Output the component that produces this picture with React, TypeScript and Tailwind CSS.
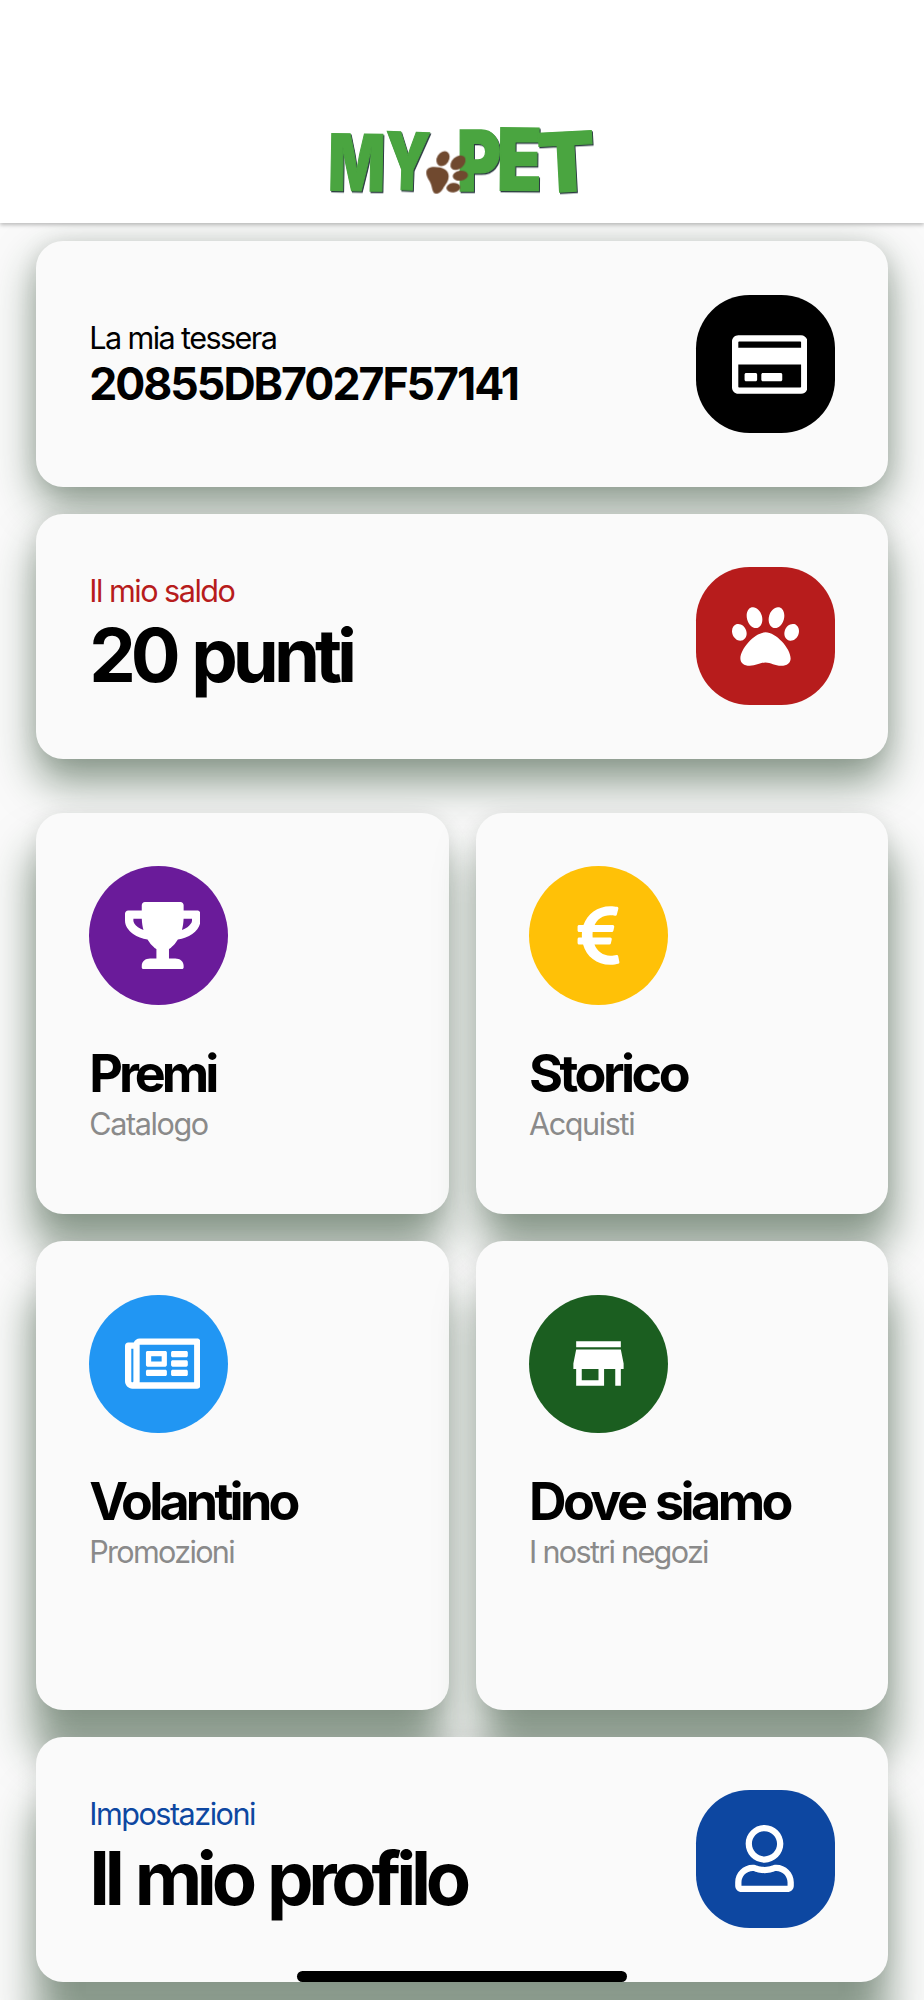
import type { ReactNode } from "react";
import { FaEuroSign, FaPaw, FaRegCreditCard, FaRegNewspaper, FaRegUser, FaTrophy } from "react-icons/fa";

function Logo() {
  const letters = [
    { char: "M", transform: "translate(54 241) rotate(1) scale(0.76 1)", size: 234 },
    { char: "Y", transform: "translate(222 237) rotate(2) scale(0.73 1)", size: 238 },
    { char: "P", transform: "translate(441 243) scale(0.8 1)", size: 252 },
    { char: "E", transform: "translate(560 241) rotate(0.5) scale(0.85 1)", size: 258 },
    { char: "T", transform: "translate(688 249) rotate(-3) scale(1.02 1)", size: 246 },
  ];
  return (
    <svg
      className="h-[130px] w-[300px] overflow-visible"
      viewBox="0 0 900 390"
      fontFamily="Inter, sans-serif"
      fontWeight="900"
    >
      <g className="drop-shadow-[3px_4px_0_#2c3b42]" fill="#4aa540" stroke="#4aa540" strokeWidth="4">
        {letters.map((l) => (
          <text key={l.char} transform={l.transform} fontSize={l.size}>
            {l.char}
          </text>
        ))}
      </g>
      <g fill="#70492f">
        <ellipse cx="399" cy="146" rx="18" ry="24" transform="rotate(32 399 146)" />
        <ellipse cx="444" cy="158" rx="18" ry="26" transform="rotate(48 444 158)" />
        <ellipse cx="451" cy="197" rx="23" ry="15" transform="rotate(-7 451 197)" />
        <ellipse cx="430" cy="233" rx="21" ry="14" transform="rotate(-5 430 233)" />
        <path d="M349 188c0-12 10-17 24-17 24 0 43 9 43 27 0 18-10 25-17 38-6 11-13 15-20 15-12 0-12-17-16-28-4-12-14-20-14-35z" />
      </g>
    </svg>
  );
}

function StoreIcon() {
  return (
    <svg className="size-[67px]" viewBox="0 0 24 24" fill="currentColor">
      <path d="M20 4H4v2.2h16V4zm1 10v-2l-1-5H4l-1 5v2h1v6h10v-6h4v6h2v-6h1zm-9 4H6v-4h6v4z" />
    </svg>
  );
}

function IconBadge({ className, children }: { className: string; children: ReactNode }) {
  return (
    <div className={`grid size-[138.5px] shrink-0 place-items-center text-white ${className}`}>
      <div className="flex size-[67px] items-center">{children}</div>
    </div>
  );
}

function WideCard({
  label,
  title,
  labelClass,
  titleClass,
  className,
  icon,
}: {
  label: string;
  title: string;
  labelClass: string;
  titleClass: string;
  className: string;
  icon: ReactNode;
}) {
  return (
    <div className={`flex items-center justify-between rounded-[27px] bg-[#fafafa] px-[53.5px] ${className}`}>
      <div className="whitespace-nowrap">
        <div className={`text-[30.6px] leading-[38px] ${labelClass}`}>{label}</div>
        <div className={titleClass}>{title}</div>
      </div>
      {icon}
    </div>
  );
}

function TileCard({
  title,
  subtitle,
  titleClass,
  subtitleClass,
  className,
  icon,
}: {
  title: string;
  subtitle: string;
  titleClass: string;
  subtitleClass: string;
  className: string;
  icon: ReactNode;
}) {
  return (
    <div className={`rounded-[27px] bg-[#fafafa] p-[53.5px] whitespace-nowrap ${className}`}>
      {icon}
      <div className={`mt-[36px] text-[52px] leading-[65px] font-bold text-black ${titleClass}`}>{title}</div>
      <div className={`-mt-px text-[30.6px] leading-[38px] text-[#8a8a8a] ${subtitleClass}`}>{subtitle}</div>
    </div>
  );
}

export default function App() {
  return (
    <div className="relative h-[2000px] w-[924px] overflow-hidden bg-[#fafafa] font-['Inter',sans-serif]">
      <header className="relative z-10 flex h-[223px] justify-center bg-white pt-[110px] shadow-[0_2px_4px_rgba(0,0,0,0.25)]">
        <div className="h-[100px] w-[304px]">
          <Logo />
        </div>
      </header>

      <main className="flex flex-col px-[35.7px] pt-[18px]">
        <WideCard
          label="La mia tessera"
          title="20855DB7027F57141"
          labelClass="text-black tracking-[-1.6px]"
          titleClass="text-[44.6px] leading-[55px] font-bold tracking-[-2px]"
          className="h-[246px] pt-[2px] shadow-[0_0_22px_rgba(0,0,0,0.08),0_18px_42px_rgba(30,62,34,0.5)]"
          icon={
            <IconBadge className="-mt-[2px] rounded-[53.5px] bg-black">
              <FaRegCreditCard className="h-[67px] w-[75.4px] shrink-0" />
            </IconBadge>
          }
        />
        <WideCard
          label="Il mio saldo"
          title="20 punti"
          labelClass="text-[#b71c1c] tracking-[-1.5px]"
          titleClass="text-[74px] leading-[91px] font-bold tracking-[-5px] [word-spacing:3px]"
          className="mt-[26.5px] h-[245px] shadow-[0_0_22px_rgba(0,0,0,0.08),0_24px_42px_rgba(30,62,34,0.5)]"
          icon={
            <IconBadge className="rounded-[53.5px] bg-[#b71c1c]">
              <FaPaw className="size-[67px]" />
            </IconBadge>
          }
        />

        {/* the left and right columns throw their shadows outwards */}
        <div className="mt-[54px] grid grid-cols-2 gap-[27px]">
          <TileCard
            title="Premi"
            subtitle="Catalogo"
            titleClass="tracking-[-4px]"
            subtitleClass="tracking-[-1.4px]"
            className="h-[401.5px] shadow-[0_0_20px_rgba(0,0,0,0.07),-4px_34px_42px_rgba(30,62,34,0.5)]"
            icon={
              <IconBadge className="rounded-full bg-[#6a1b9a]">
                <FaTrophy className="h-[67px] w-[75.4px] shrink-0" />
              </IconBadge>
            }
          />
          <TileCard
            title="Storico"
            subtitle="Acquisti"
            titleClass="tracking-[-3.5px]"
            subtitleClass="tracking-[-1.4px]"
            className="h-[401.5px] shadow-[0_0_20px_rgba(0,0,0,0.07),5px_34px_42px_rgba(30,62,34,0.5)]"
            icon={
              <IconBadge className="rounded-full bg-[#ffc107]">
                <FaEuroSign className="size-[67px]" />
              </IconBadge>
            }
          />
          <TileCard
            title="Volantino"
            subtitle="Promozioni"
            titleClass="tracking-[-3.8px]"
            subtitleClass="tracking-[-1.7px]"
            className="h-[468.5px] shadow-[0_0_20px_rgba(0,0,0,0.07),-4px_48px_42px_rgba(30,62,34,0.5)]"
            icon={
              <IconBadge className="rounded-full bg-[#2196f3]">
                <FaRegNewspaper className="h-[67px] w-[75.4px] shrink-0" />
              </IconBadge>
            }
          />
          <TileCard
            title="Dove siamo"
            subtitle="I nostri negozi"
            titleClass="tracking-[-3.6px] [word-spacing:2px]"
            subtitleClass="tracking-[-1.7px]"
            className="h-[468.5px] shadow-[0_0_20px_rgba(0,0,0,0.07),5px_48px_42px_rgba(30,62,34,0.5)]"
            icon={
              <IconBadge className="rounded-full bg-[#1b5e20]">
                <StoreIcon />
              </IconBadge>
            }
          />
        </div>

        <WideCard
          label="Impostazioni"
          title="Il mio profilo"
          labelClass="text-[#0d47a1] tracking-[-1.5px]"
          titleClass="text-[74px] leading-[91px] font-bold tracking-[-5.3px] [word-spacing:3px]"
          className="mt-[27px] h-[245px] shadow-[0_0_22px_rgba(0,0,0,0.08),0_62px_42px_rgba(30,62,34,0.5)]"
          icon={
            <IconBadge className="rounded-[53.5px] bg-[#0d47a1]">
              <FaRegUser className="size-[67px] -translate-x-px -translate-y-px" />
            </IconBadge>
          }
        />
      </main>

      {/* home indicator */}
      <div className="absolute bottom-[18px] left-[297px] h-[11px] w-[330px] rounded-full bg-black" />
    </div>
  );
}
